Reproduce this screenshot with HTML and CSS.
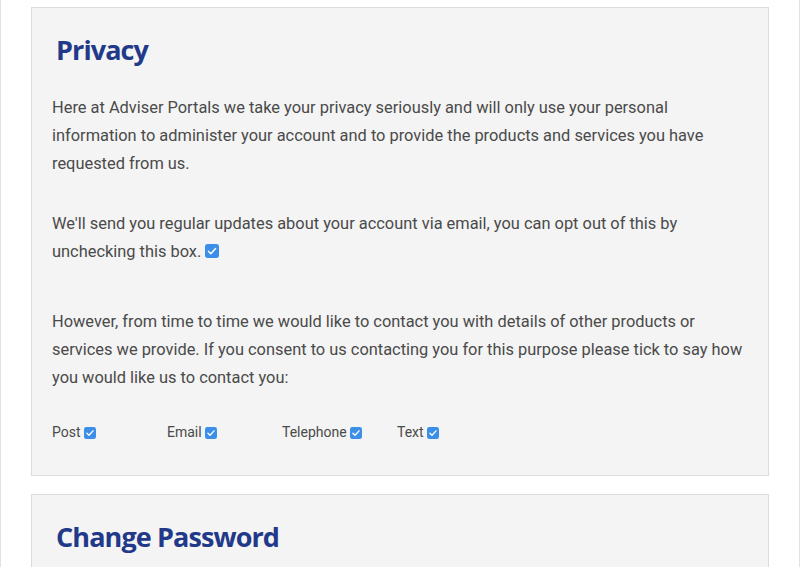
FILE: index.html
```html
<!DOCTYPE html>
<html>
<head>
<meta charset="utf-8">
<link rel="stylesheet" href="styles.css">
</head>
<body>
<div class="page">
  <section class="panel">
    <h2 class="panel-title">Privacy</h2>
    <p class="para">Here at Adviser Portals we take your privacy seriously and will only use your personal information to administer your account and to provide the products and services you have requested from us.</p>
    <p class="para para-updates">We'll send you regular updates about your account via email, you can opt out of this by unchecking this box. <span class="check"><svg viewBox="0 0 13 13" width="14" height="14"><rect x="0" y="0" width="13" height="13" rx="2.5" fill="#3b8fe8"/><path d="M3.2 6.8 L5.4 9 L9.8 4.2" fill="none" stroke="#fff" stroke-width="1.4" stroke-linecap="round" stroke-linejoin="round"/></svg></span></p>
    <p class="para para-consent">However, from time to time we would like to contact you with details of other products or services we provide. If you consent to us contacting you for this purpose please tick to say how you would like us to contact you:</p>
    <div class="options">
      <label class="option">Post <span class="check small"><svg viewBox="0 0 13 13" width="12" height="12"><rect x="0" y="0" width="13" height="13" rx="2.5" fill="#3b8fe8"/><path d="M3.2 6.8 L5.4 9 L9.8 4.2" fill="none" stroke="#fff" stroke-width="1.5" stroke-linecap="round" stroke-linejoin="round"/></svg></span></label>
      <label class="option">Email <span class="check small"><svg viewBox="0 0 13 13" width="12" height="12"><rect x="0" y="0" width="13" height="13" rx="2.5" fill="#3b8fe8"/><path d="M3.2 6.8 L5.4 9 L9.8 4.2" fill="none" stroke="#fff" stroke-width="1.5" stroke-linecap="round" stroke-linejoin="round"/></svg></span></label>
      <label class="option">Telephone <span class="check small"><svg viewBox="0 0 13 13" width="12" height="12"><rect x="0" y="0" width="13" height="13" rx="2.5" fill="#3b8fe8"/><path d="M3.2 6.8 L5.4 9 L9.8 4.2" fill="none" stroke="#fff" stroke-width="1.5" stroke-linecap="round" stroke-linejoin="round"/></svg></span></label>
      <label class="option">Text <span class="check small"><svg viewBox="0 0 13 13" width="12" height="12"><rect x="0" y="0" width="13" height="13" rx="2.5" fill="#3b8fe8"/><path d="M3.2 6.8 L5.4 9 L9.8 4.2" fill="none" stroke="#fff" stroke-width="1.5" stroke-linecap="round" stroke-linejoin="round"/></svg></span></label>
    </div>
  </section>
  <section class="panel">
    <h2 class="panel-title">Change Password</h2>
  </section>
</div>
</body>
</html>
```
FILE: styles.css
```css
html, body {
  margin: 0;
  padding: 0;
  background: #fff;
}
body {
  font-family: Roboto, "Liberation Sans", sans-serif;
  color: #4a4a4a;
}
.page {
  border-left: 1px solid #e2e2e2;
  border-right: 1px solid #e2e2e2;
  height: 567px;
  overflow: hidden;
  box-sizing: border-box;
  padding: 7px 30px 0 30px;
  display: flex;
  flex-direction: column;
  gap: 18px;
}
.panel {
  background: #f4f4f4;
  border: 1px solid #dcdcdc;
  padding: 24px 20px 35px 20px;
  flex-shrink: 0;
}
.panel-title {
  margin: 0 0 26px 4px;
  font-family: "Open Sans", sans-serif;
  font-weight: 700;
  font-size: 27px;
  line-height: 36px;
  color: #22398a;
  letter-spacing: -0.9px;
}
.para {
  margin: 0;
  font-size: 16.4px;
  line-height: 28px;
}
.para-updates {
  margin-top: 32px;
}
.para-consent {
  margin-top: 42px;
}
.check {
  display: inline-block;
  vertical-align: -1px;
  line-height: 0;
}
.check.small {
  vertical-align: -2px;
}
.options {
  margin-top: 32px;
  display: flex;
}
.option {
  width: 115px;
  font-size: 14px;
  line-height: 16px;
}
```
